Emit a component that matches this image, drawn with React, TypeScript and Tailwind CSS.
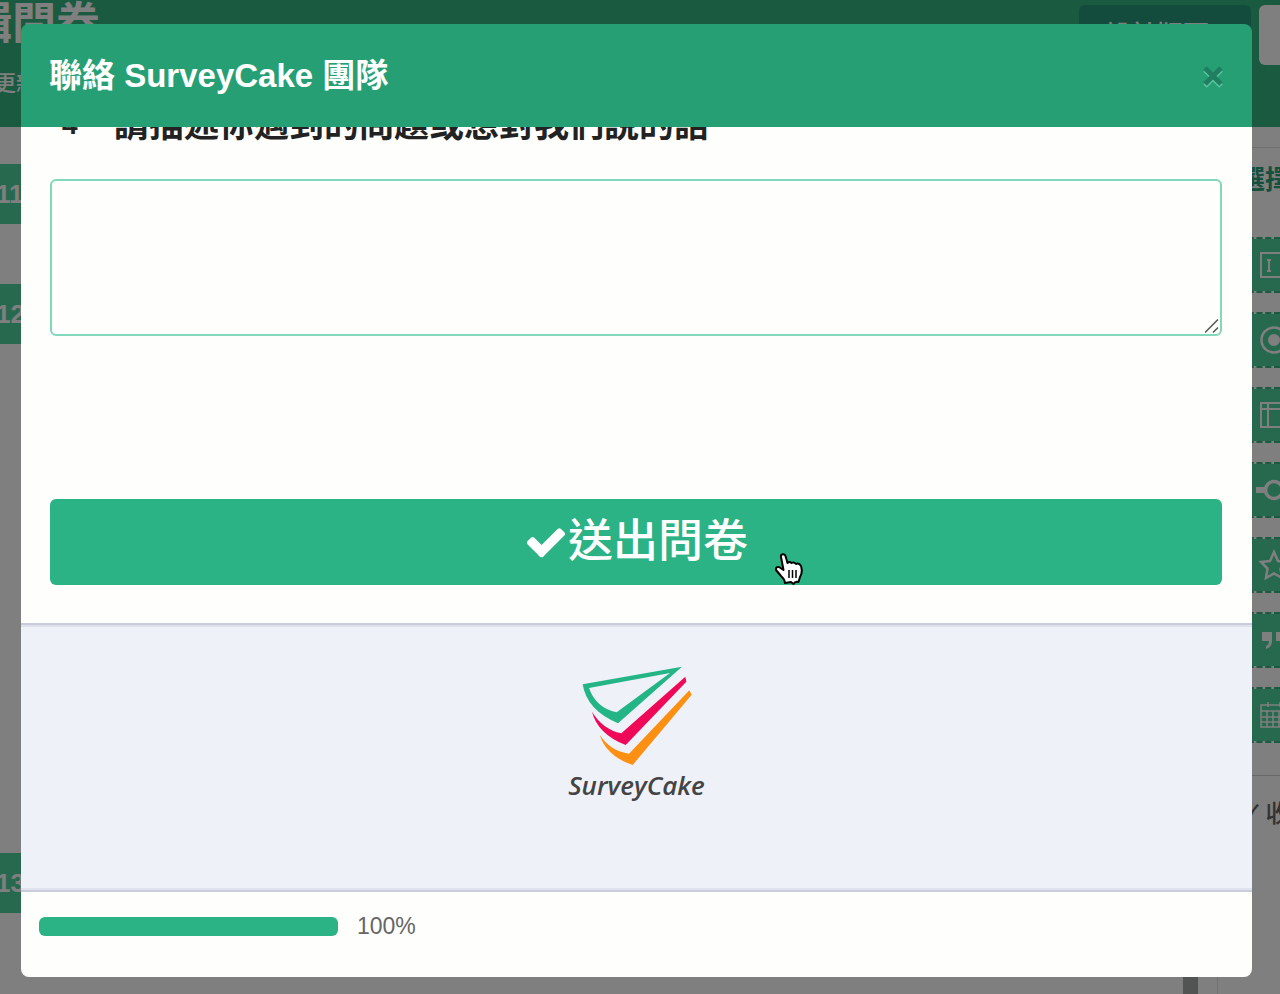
import React from 'react';

const tileIcons = [
  <>
    <rect x="1" y="1" width="32" height="24" />
    <path d="M9 8v11M7 8h4M7 19h4" />
  </>,
  <>
    <circle cx="14" cy="13" r="12.5" strokeWidth="2.5" />
    <circle cx="14" cy="13" r="6" fill="currentColor" stroke="none" />
  </>,
  <>
    <rect x="1" y="1" width="32" height="24" />
    <path d="M1 7h32M8 1v24" />
  </>,
  <>
    <path d="M-4 13h9" strokeWidth="6" />
    <circle cx="14" cy="13" r="8.5" strokeWidth="3.5" />
  </>,
  <path d="M14 0l4 9 9 1-6.500 6.500 1.500 9.500-8-4.500-8 4.500 1.500-9.500L1 10l9-1z" strokeWidth="2.500" />,
  <g fill="currentColor" stroke="none">
    <path d="M2 5h10v9q0 6-6 8v-3q3-1 3-5H2z" />
    <path d="M16 5h10v9q0 6-6 8v-3q3-1 3-5h-7z" />
  </g>,
  <path d="M1 3h32v22H1zM1 9h32M8 0v5M20 0v5M7 9v16M13 9v16M19 9v16M1 15h32M1 20h32" strokeWidth="1.5" />,
];

const questionNumbers = [
  { label: '11', spacing: 'mt-[37px]' },
  { label: '12', spacing: 'mt-[60px]' },
  { label: '13', spacing: 'mt-[509px]' },
];

const Editor: React.FC = () => {
  return (
    <div className="flex min-h-screen flex-col overflow-hidden bg-white" aria-hidden="true">
      <header className="flex h-[127px] items-start justify-between bg-[#32b482] text-white">
        <div className="-ml-8">
          <h1 className="text-[44px] leading-[48px] font-bold">輯問卷</h1>
          <p className="mt-5 pl-[26px] text-[22px] leading-8 font-medium">更新</p>
        </div>
        <div className="-mr-10 flex shrink-0 gap-2 pt-[5px]">
          <button
            type="button"
            tabIndex={-1}
            className="h-[60px] w-[172px] rounded-md bg-[#26997a] pr-4 text-[26px] font-medium"
          >
            設計版面
          </button>
          <button type="button" tabIndex={-1} className="h-[60px] w-[61px] rounded-md bg-white" />
        </div>
      </header>
      <div className="flex flex-1 overflow-hidden">
        <div className="flex-1">
          {questionNumbers.map(({ label, spacing }) => (
            <div
              key={label}
              className={`-ml-1 flex h-[60px] w-10 items-center bg-[#4ed29e] text-[26px] font-bold text-white ${spacing}`}
            >
              {label}
            </div>
          ))}
        </div>
        <div className="w-[15px] bg-[#a4a8a6]" />
        <div className="w-5 border-r border-[#e4e4e4]" />
        <aside className="w-[62px] pt-5">
          <div className="border-t border-[#dedede] pt-4 pl-[21px]">
            <h2 className="text-[26px] leading-8 font-bold whitespace-nowrap text-[#28a077]">選擇</h2>
          </div>
          <ul className="mt-[41px] flex flex-col gap-[19px] pl-[21px]">
            {tileIcons.map((icon, index) => (
              <li
                key={index}
                className="flex h-14 items-center overflow-hidden border-y-2 border-dashed border-[#32b482] bg-[#4ed29e] bg-clip-padding pl-[21px] text-white"
              >
                <svg
                  viewBox="0 0 34 26"
                  className="h-[26px] w-[34px] shrink-0 overflow-visible"
                  fill="none"
                  stroke="currentColor"
                  strokeWidth="2"
                >
                  {icon}
                </svg>
              </li>
            ))}
          </ul>
          <p className="mt-8 border-t border-[#d0d0d0] pt-[22px] pl-6 text-[24px] leading-8 font-medium whitespace-nowrap text-[#666]">
            ✓ 收集
          </p>
        </aside>
      </div>
    </div>
  );
};

const Logo: React.FC = () => {
  return (
    <svg viewBox="95 45 336 306" className="h-[102px] w-28" aria-hidden="true">
      <path
        fill="#23b586"
        fillRule="evenodd"
        d="M100 103L398 50L206 220Q112 180 100 103ZM119 114Q140 174 202 187L362 69Z"
      />
      <path fill="#ef0758" d="M128 185Q160 238 216 250L408 80L411 95L229 285Q145 252 128 185Z" />
      <path fill="#fd8f12" d="M151 254Q183 303 239 311L420 121L427 134L250 345Q170 317 151 254Z" />
    </svg>
  );
};

const HandCursor: React.FC = () => {
  return (
    <svg
      viewBox="0 0 30 34"
      className="pointer-events-none absolute top-[53px] left-[calc(50%+138px)] h-[34px] w-[30px]"
      aria-hidden="true"
    >
      <path
        d="M8 2.500Q10.500 1.500 11.500 4L13.500 11Q15.500 9 17.500 11Q20 9.500 22 12Q25 10.500 27 14Q29 20 26 25L24.500 30Q21 29 19.500 32L17 30L11 31Q10.500 27 7 24L2 18Q1.500 14.500 5 15L9.500 18L7 5Q6.500 3 8 2.500Z"
        fill="white"
        stroke="black"
        strokeWidth="2"
        strokeLinejoin="round"
      />
      <path d="M15 18v8M18.500 18v8M22 18v8" stroke="black" strokeWidth="1.5" />
    </svg>
  );
};

export default function App() {
  return (
    <div className="relative font-['Liberation_Sans','Noto_Sans_CJK_TC',sans-serif]">
      <Editor />
      <div className="absolute inset-0 flex bg-black/50 pt-6 pr-7 pb-[17px] pl-[21px]">
        <section
          role="dialog"
          aria-labelledby="contact-title"
          className="flex flex-1 flex-col overflow-hidden rounded-lg"
        >
          <header className="relative z-10 flex h-[103px] shrink-0 items-center justify-between bg-[#269f75] px-7">
            <h2 id="contact-title" className="text-[33px] leading-10 font-bold text-white">
              聯絡 SurveyCake 團隊
            </h2>
            <button type="button" aria-label="Close" className="text-[#207f60]">
              <svg
                viewBox="0 0 22 24"
                className="h-6 w-[22px]"
                fill="none"
                stroke="currentColor"
                strokeWidth="5"
              >
                <path d="M3 6L19 22M19 6L3 22" stroke="#5cc4a0" />
                <path d="M3 4L19 20M19 4L3 20" />
              </svg>
            </button>
          </header>

          <form
            className="shrink-0 overflow-hidden bg-[#fefefd] pr-[30px] pb-[38px] pl-[29px]"
            onSubmit={(e) => e.preventDefault()}
          >
            <div className="-mt-7 flex items-center text-[#222]">
              <span className="w-16 pl-3 text-[28px] leading-[52px] font-bold">4</span>
              <label htmlFor="message" className="text-[35px] leading-[52px] font-bold whitespace-nowrap">
                請描述你遇到的問題或想對我們說的話
              </label>
            </div>
            <div className="relative mt-7">
              <textarea
                id="message"
                className="block h-[157px] w-full resize-none rounded-md border-2 border-[#82d8ba] bg-transparent p-3 text-2xl outline-none"
              />
              <svg
                viewBox="0 0 14 14"
                className="pointer-events-none absolute right-[3px] bottom-[3px] h-3.5 w-3.5"
                stroke="#555"
                strokeWidth="1.5"
                aria-hidden="true"
              >
                <path d="M0 13.500L13 0.500M8 13.500L13 8.500" />
              </svg>
            </div>
            <div className="relative mt-[163px]">
              <button
                type="submit"
                className="flex h-[86px] w-full items-center justify-center rounded-md bg-[#2bb285] text-[45px] leading-[60px] font-medium text-white"
              >
                <svg viewBox="0 0 1792 1792" className="h-11 w-11" fill="currentColor" aria-hidden="true">
                  <path d="M1671 566q0 40-28 68l-724 724-136 136q-28 28-68 28t-68-28l-136-136-362-362q-28-28-28-68t28-68l136-136q28-28 68-28t68 28l294 295 656-657q28-28 68-28t68 28l136 136q28 28 28 68z" />
                </svg>
                送出問卷
              </button>
              <HandCursor />
            </div>
          </form>

          <div className="flex h-[269px] shrink-0 flex-col items-center bg-[#eff1f8] pt-[42px] shadow-[inset_0_2px_0_#c9ccda,inset_0_4px_0_#dee1eb,inset_0_-2px_0_#c9ccda,inset_0_-4px_0_#e0e3ed]">
            <Logo />
            <p className="font-['Open_Sans',sans-serif] text-[26px] leading-9 font-semibold text-[#444] italic">
              SurveyCake
            </p>
          </div>

          <footer className="flex flex-1 items-start gap-[19px] bg-[#fefefd] px-[18px] pt-5">
            <div className="mt-[5px] h-[19px] w-[299px] rounded-md bg-[#2bb285]" />
            <span className="text-[23px] leading-7 text-[#666]">100%</span>
          </footer>
        </section>
      </div>
    </div>
  );
}
